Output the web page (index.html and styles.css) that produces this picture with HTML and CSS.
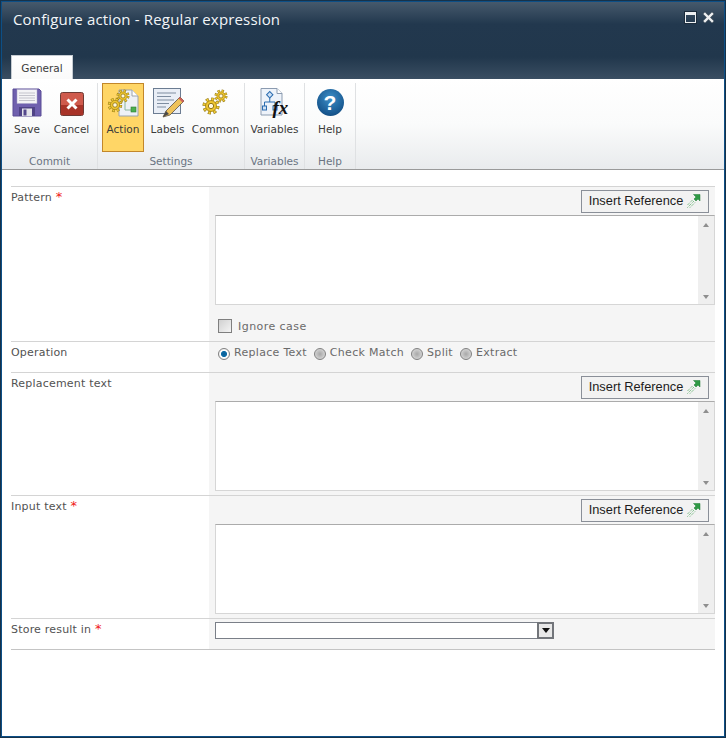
FILE: index.html
```html
<!DOCTYPE html>
<html lang="en">
<head>
    <meta charset="UTF-8">
    <title>Configure action - Regular expression</title>
    <link rel="stylesheet" href="styles.css">
</head>
<body>
<svg class="defs" width="0" height="0">
    <defs>
        <g id="gear">
            <circle cx="0" cy="0" r="7" fill="none" stroke="#8f7410" stroke-width="4" stroke-dasharray="3 2.5"></circle>
            <circle cx="0" cy="0" r="7" fill="none" stroke="#f0cc38" stroke-width="2.800" stroke-dasharray="2 3.500" stroke-dashoffset="-0.500"></circle>
            <circle cx="0" cy="0" r="5.800" fill="#eec52f" stroke="#9c7c10" stroke-width="0.800"></circle>
            <circle cx="0" cy="0" r="2.800" fill="#fff8dc" stroke="#8d7010" stroke-width="1"></circle>
        </g>
        <g id="insert-arrow">
            <path d="M0.500 13.500 L7 7 M3 13.500 L8.500 8 M0.500 11 L6 5.500" stroke="#58ad66" stroke-width="1" stroke-dasharray="1 1" fill="none"></path>
            <path d="M6.500 0.500 H13 V7 L11 5 L9 7 L7 5 L9 3 Z" fill="#2f9a45" stroke="#1d7a33" stroke-width="0.500"></path>
        </g>
    </defs>
</svg>

<div class="window">
    <div class="titlebar">
        <div class="title-row">
            <span class="title">Configure action - Regular expression</span>
            <div class="window-btns">
                <span class="btn-max"></span>
                <svg width="11" height="11" viewBox="0 0 11 11">
                    <path d="M2 2 L9 9 M9 2 L2 9" stroke="#3a4a58" stroke-width="4" stroke-linecap="square"></path>
                    <path d="M2 2 L9 9 M9 2 L2 9" stroke="#eef0f2" stroke-width="2.400" stroke-linecap="square"></path>
                </svg>
            </div>
        </div>
        <div class="tab">General</div>
    </div>

    <div class="ribbon">
        <div class="group group-commit">
            <div class="group-btns">
                <div class="rbtn rbtn-save">
                    <svg class="ico" width="32" height="32" viewBox="0 0 32 32">
                        <path d="M2 2 H28 L30 4 V29 H2 Z" fill="#6f60ae" stroke="#5a4c96"></path>
                        <rect x="6" y="2.500" width="20" height="14" fill="#f4f4f6" stroke="#a9a4c8" stroke-width="0.500"></rect>
                        <path d="M8 6 H24 M8 8.500 H24 M8 11 H24 M8 13.500 H24" stroke="#c4c4cc"></path>
                        <rect x="8" y="20" width="16" height="9" fill="#4f4386"></rect>
                        <rect x="11" y="21.500" width="10" height="7.500" fill="#e4e4ea"></rect>
                        <rect x="12.500" y="22.500" width="3" height="6" fill="#54488c"></rect>
                    </svg>
                    <span>Save</span>
                </div>
                <div class="rbtn rbtn-cancel">
                    <svg class="ico" width="32" height="32" viewBox="0 0 32 32">
                        <rect x="4.500" y="5.500" width="23" height="23" rx="2" fill="#cf5a4c" stroke="#6e3a34"></rect>
                        <rect x="5" y="18" width="22" height="10" fill="#a83328"></rect>
                        <path d="M11.500 12.500 L20.500 21.500 M20.500 12.500 L11.500 21.500" stroke="#fff" stroke-width="3"></path>
                    </svg>
                    <span>Cancel</span>
                </div>
            </div>
            <div class="group-name">Commit</div>
        </div>

        <div class="group group-settings">
            <div class="group-btns">
                <div class="rbtn rbtn-action active">
                    <svg class="ico" width="32" height="32" viewBox="0 0 32 32">
                        <path d="M12 3 H25 L31 9 V29 H12 Z" fill="#eef1f6" stroke="#9aa3ad"></path>
                        <path d="M25 3 V9 H31" fill="#fff" stroke="#9aa3ad"></path>
                        <path d="M18 14 V23 H24" fill="none" stroke="#8ab69a"></path>
                        <rect x="24" y="20" width="5" height="5" fill="#4caf50" stroke="#2e7d32" stroke-width="0.600"></rect>
                        <use href="#gear" transform="translate(16 9) scale(0.72)"></use>
                        <use href="#gear" transform="translate(8 18) scale(0.8)"></use>
                    </svg>
                    <span>Action</span>
                </div>
                <div class="rbtn rbtn-labels">
                    <svg class="ico" width="32" height="32" viewBox="0 0 32 32">
                        <rect x="1.500" y="1.500" width="27" height="25" fill="#e9eef6" stroke="#6b7c92"></rect>
                        <path d="M5 6 H24 M5 9.500 H19 M5 13 H22 M5 16.500 H17 M5 20 H14" stroke="#7e8da0"></path>
                        <path d="M11 30 L14 24 L28 10 L32 14 L18 28 Z" fill="#eec25a" stroke="#5c5245" stroke-width="0.800"></path>
                        <path d="M28 10 L32 14 L30.500 15.500 L26.500 11.500 Z" fill="#d0605a"></path>
                        <path d="M11 30 L14 24 L17 27 Z" fill="#4a4a4a"></path>
                    </svg>
                    <span>Labels</span>
                </div>
                <div class="rbtn rbtn-common">
                    <svg class="ico" width="32" height="32" viewBox="0 0 32 32">
                        <use href="#gear" transform="translate(21 9) scale(0.72)"></use>
                        <use href="#gear" transform="translate(11 19) scale(0.95)"></use>
                    </svg>
                    <span>Common</span>
                </div>
            </div>
            <div class="group-name">Settings</div>
        </div>

        <div class="group group-vars">
            <div class="group-btns">
                <div class="rbtn rbtn-vars">
                    <div class="ico ico-vars">
                        <svg width="32" height="32" viewBox="0 0 32 32">
                            <path d="M2 1.500 H18 L23 6.500 V28 H2 Z" fill="#eef3fa" stroke="#8b9bb0"></path>
                            <path d="M18 1.500 V6.500 H23" fill="#fff" stroke="#8b9bb0"></path>
                            <rect x="8.500" y="5.500" width="4.500" height="4.500" transform="rotate(45 10.750 7.750)" fill="#cfe1f5" stroke="#2b6cb0"></rect>
                            <path d="M10.750 11 V15 M5.500 19 V15 H16 V19" fill="none" stroke="#2b6cb0"></path>
                            <rect x="3.500" y="19" width="4" height="4" fill="#cfe1f5" stroke="#2b6cb0"></rect>
                            <rect x="14" y="19" width="4" height="4" fill="#cfe1f5" stroke="#2b6cb0"></rect>
                        </svg>
                        <span class="fx">fx</span>
                    </div>
                    <span>Variables</span>
                </div>
            </div>
            <div class="group-name">Variables</div>
        </div>

        <div class="group group-help">
            <div class="group-btns">
                <div class="rbtn rbtn-help">
                    <div class="ico ico-help">?</div>
                    <span>Help</span>
                </div>
            </div>
            <div class="group-name">Help</div>
        </div>
    </div>

    <div class="form">
        <div class="row">
            <div class="label">Pattern <span class="req">*</span></div>
            <div class="value">
                <div class="ref-line">
                    <button class="ref-btn">Insert Reference <svg width="14" height="14" viewBox="0 0 14 14"><use href="#insert-arrow"></use></svg></button>
                </div>
                <div class="textbox">
                    <textarea></textarea>
                    <div class="scroll"><i class="up"></i><i class="down"></i></div>
                </div>
                <label class="check"><span class="box"></span>Ignore case</label>
            </div>
        </div>

        <div class="row">
            <div class="label">Operation</div>
            <div class="value radios">
                <span class="radio on"></span><span class="rlabel">Replace Text</span>
                <span class="radio"></span><span class="rlabel">Check Match</span>
                <span class="radio"></span><span class="rlabel">Split</span>
                <span class="radio"></span><span class="rlabel">Extract</span>
            </div>
        </div>

        <div class="row">
            <div class="label">Replacement text</div>
            <div class="value">
                <div class="ref-line">
                    <button class="ref-btn">Insert Reference <svg width="14" height="14" viewBox="0 0 14 14"><use href="#insert-arrow"></use></svg></button>
                </div>
                <div class="textbox">
                    <textarea></textarea>
                    <div class="scroll"><i class="up"></i><i class="down"></i></div>
                </div>
            </div>
        </div>

        <div class="row">
            <div class="label">Input text <span class="req">*</span></div>
            <div class="value">
                <div class="ref-line">
                    <button class="ref-btn">Insert Reference <svg width="14" height="14" viewBox="0 0 14 14"><use href="#insert-arrow"></use></svg></button>
                </div>
                <div class="textbox">
                    <textarea></textarea>
                    <div class="scroll"><i class="up"></i><i class="down"></i></div>
                </div>
            </div>
        </div>

        <div class="row row-last">
            <div class="label">Store result in <span class="req">*</span></div>
            <div class="value">
                <div class="dropdown"><span class="drop-btn"><i></i></span></div>
            </div>
        </div>
    </div>
</div>
</body>
</html>
```

FILE: styles.css
```css
html, body {
    margin: 0;
    padding: 0;
}

body {
    font-family: "DejaVu Sans", sans-serif;
    font-size: 11px;
    background-color: #fff;
}

.defs {
    display: block;
    height: 0;
}

.window {
    box-sizing: border-box;
    width: 726px;
    height: 738px;
    border: 2px solid #0d4f86;
    outline: 1px solid #16324a;
    outline-offset: -1px;
    background-color: #fff;
}

/* title bar */
.titlebar {
    box-sizing: border-box;
    height: 77px;
    display: flex;
    flex-direction: column;
    justify-content: space-between;
    background: linear-gradient(#46596c 0, #22384e 22px, #21374c 55px, #3a4e62 77px);
}

.title-row {
    display: flex;
    justify-content: space-between;
    padding: 7px 10px 0 11px;
}

.title {
    color: #f2f5f8;
    font-family: "Open Sans", sans-serif;
    font-size: 15px;
    letter-spacing: 0.160px;
    line-height: 20px;
}

.window-btns {
    display: flex;
    gap: 7px;
    padding-top: 3px;
}

.btn-max {
    box-sizing: border-box;
    width: 11px;
    height: 11px;
    border: 1px solid #eef0f2;
    border-top-width: 3px;
    outline: 1px solid #1c2c3c;
}

.tab {
    box-sizing: border-box;
    width: 62px;
    height: 24px;
    margin-left: 9px;
    line-height: 25px;
    text-align: center;
    color: #3b3b3b;
    font-size: 10.500px;
    background: linear-gradient(#fff, #fafafa);
    border: 1px solid #c6ccd2;
    border-bottom: none;
}

/* ribbon */
.ribbon {
    box-sizing: border-box;
    height: 91px;
    display: flex;
    background: linear-gradient(#fff 0, #fafbfb 45px, #e9ebed 90px);
    border-bottom: 1px solid #9a9a9a;
}

.group {
    display: flex;
    flex-direction: column;
    justify-content: space-between;
    border-right: 1px solid #dfe1e3;
    margin-top: 4px;
}

.group-commit {
    width: 95px;
}

.group-settings {
    width: 146px;
}

.group-settings .group-btns {
    justify-content: flex-start;
    padding-left: 4px;
}

.group-vars {
    width: 59px;
}

.group-help {
    width: 50px;
}

.group-btns {
    display: flex;
    justify-content: center;
}

.group-name {
    height: 15px;
    line-height: 15px;
    text-align: center;
    color: #6a7482;
    font-size: 10.500px;
}

.rbtn {
    box-sizing: border-box;
    height: 69px;
    padding-top: 4px;
    display: flex;
    flex-direction: column;
    align-items: center;
    color: #3b3b3b;
    font-size: 10.500px;
    white-space: nowrap;
}

.rbtn span {
    line-height: 14px;
    margin-top: 3px;
}

.rbtn .ico {
    display: block;
    width: 32px;
    height: 32px;
}

.rbtn-save {
    width: 44px;
}

.rbtn-cancel {
    width: 45px;
}

.rbtn-action {
    width: 42px;
    margin-right: 1px;
}

.rbtn-labels {
    width: 45px;
}

.rbtn-common {
    width: 51px;
}

.rbtn-vars {
    width: 55px;
}

.rbtn-help {
    width: 44px;
}

.rbtn.active {
    background-color: #ffd666;
    border: 1px solid #c2872a;
    padding-top: 3px;
}

.ico-vars {
    position: relative;
}

.fx {
    position: absolute;
    left: 14px;
    top: 11px;
    margin: 0 !important;
    font-family: "Liberation Serif", serif;
    font-style: italic;
    font-weight: bold;
    font-size: 19px;
    line-height: 20px !important;
    color: #111;
}

.rbtn .ico-help {
    box-sizing: border-box;
    width: 27px;
    height: 27px;
    margin: 2px 0 3px;
    border-radius: 50%;
    background: radial-gradient(circle at 50% 35%, #3d8fc8, #17578f 70%, #123f6c);
    color: #fff;
    font-family: "Liberation Sans", sans-serif;
    font-weight: bold;
    font-size: 21px;
    line-height: 27px;
    text-align: center;
}

/* form */
.form {
    padding: 16px 9px 0;
}

.row {
    display: flex;
    border-top: 1px solid #d4d4d4;
}

.row-last {
    border-bottom: 1px solid #c4c4c4;
}

.label {
    box-sizing: border-box;
    width: 198px;
    padding-top: 4px;
    line-height: 14px;
    color: #525252;
    letter-spacing: 0.200px;
}

.req {
    color: #f01818;
    font-size: 13px;
    line-height: 0;
}

.value {
    flex: 1;
    padding-left: 6px;
    background-color: #f5f5f5;
}

.ref-line {
    display: flex;
    justify-content: flex-end;
    padding: 3px 6px 2px 0;
}

.ref-btn {
    box-sizing: border-box;
    width: 128px;
    height: 23px;
    padding: 0 0 2px;
    display: flex;
    align-items: center;
    justify-content: center;
    gap: 4px;
    font-family: "Liberation Sans", sans-serif;
    font-size: 12.800px;
    color: #1c1c1c;
    background-color: #f2f2f2;
    border: 1px solid #8a8f98;
}

.textbox {
    box-sizing: border-box;
    height: 90px;
    display: flex;
    background-color: #fff;
    border: 1px solid #d6d6d6;
    border-top-color: #ababab;
    margin-bottom: 4px;
}

.textbox textarea {
    flex: 1;
    border: none;
    padding: 0;
    margin: 0;
    resize: none;
    outline: none;
    background-color: #fff;
}

.scroll {
    box-sizing: border-box;
    width: 16px;
    display: flex;
    flex-direction: column;
    justify-content: space-between;
    align-items: center;
    padding: 7px 0 5px;
    background-color: #efefef;
}

.scroll i {
    width: 0;
    height: 0;
    border-left: 3.500px solid transparent;
    border-right: 3.500px solid transparent;
}

.scroll .up {
    border-bottom: 4px solid #8e8e8e;
}

.scroll .down {
    border-top: 4px solid #8e8e8e;
}

.check {
    display: flex;
    align-items: center;
    height: 32px;
    padding: 2px 0 0 3px;
    box-sizing: border-box;
    color: #6a6a6a;
    letter-spacing: 0.450px;
}

.box {
    box-sizing: border-box;
    width: 14px;
    height: 14px;
    margin-right: 6px;
    border: 1px solid #7f7f7f;
    background: linear-gradient(135deg, #d0d0d0, #f4f4f4);
}

.radios {
    box-sizing: border-box;
    height: 30px;
    display: flex;
    align-items: center;
    padding: 0 0 9px 9px;
    color: #6a6a6a;
    letter-spacing: 0.300px;
}

.radio {
    box-sizing: border-box;
    width: 12px;
    height: 12px;
    margin: 3px 4px 0 0;
    border-radius: 50%;
    border: 1px solid #808080;
    background: radial-gradient(circle, #a8a8a8 0, #c8c8c8 55%, #ececec 100%);
}

.radio.on {
    background: radial-gradient(circle, #0b5f96 0, #0f6ea8 38%, #fff 48%, #ddd 100%);
}

.rlabel {
    margin-right: 7px;
}

.dropdown {
    box-sizing: border-box;
    width: 339px;
    height: 17px;
    margin-top: 3px;
    margin-bottom: 10px;
    display: flex;
    justify-content: flex-end;
    background-color: #fff;
    border: 1px solid #7a7f88;
}

.drop-btn {
    box-sizing: border-box;
    width: 17px;
    margin: -1px -1px -1px 0;
    display: flex;
    align-items: center;
    justify-content: center;
    background-color: #e8e8e8;
    border: 2px solid #72757a;
}

.drop-btn i {
    width: 0;
    height: 0;
    border-left: 4px solid transparent;
    border-right: 4px solid transparent;
    border-top: 5px solid #111;
}
```
